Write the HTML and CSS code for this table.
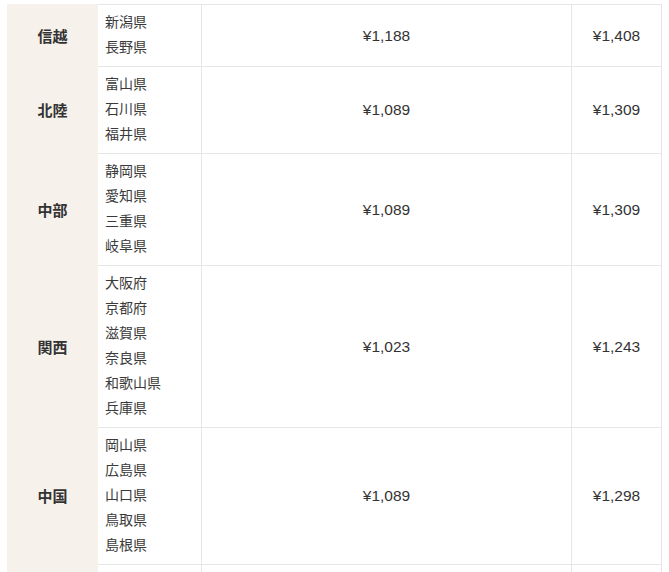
FILE: index.html
```html
<!DOCTYPE html>
<html lang="ja">
<head>
<meta charset="utf-8">
<title>送料表</title>
<link rel="stylesheet" href="styles.css">
</head>
<body>
<div class="wrap">
  <div class="table">
    <div class="row">
      <div class="region">信越</div>
      <div class="prefs">新潟県<br>長野県</div>
      <div class="price">¥1,188</div>
      <div class="price">¥1,408</div>
    </div>
    <div class="row">
      <div class="region">北陸</div>
      <div class="prefs">富山県<br>石川県<br>福井県</div>
      <div class="price">¥1,089</div>
      <div class="price">¥1,309</div>
    </div>
    <div class="row">
      <div class="region">中部</div>
      <div class="prefs">静岡県<br>愛知県<br>三重県<br>岐阜県</div>
      <div class="price">¥1,089</div>
      <div class="price">¥1,309</div>
    </div>
    <div class="row">
      <div class="region">関西</div>
      <div class="prefs">大阪府<br>京都府<br>滋賀県<br>奈良県<br>和歌山県<br>兵庫県</div>
      <div class="price">¥1,023</div>
      <div class="price">¥1,243</div>
    </div>
    <div class="row">
      <div class="region">中国</div>
      <div class="prefs">岡山県<br>広島県<br>山口県<br>鳥取県<br>島根県</div>
      <div class="price">¥1,089</div>
      <div class="price">¥1,298</div>
    </div>
    <div class="row row-next">
      <div class="region"></div>
      <div class="prefs"></div>
      <div class="price"></div>
      <div class="price"></div>
    </div>
  </div>
</div>
</body>
</html>
```
FILE: styles.css
```css
html, body {
  margin: 0;
  padding: 0;
  background: #ffffff;
}

.wrap {
  height: 572px;
  overflow: hidden;
  padding: 4px 7px 0;
  box-sizing: border-box;
  font-family: "Liberation Sans", "Noto Sans CJK JP", sans-serif;
  color: #333333;
}

.row {
  display: grid;
  grid-template-columns: 91px 104px 370px 90px;
}

.row-next {
  height: 40px;
}

.region {
  background: #f6f1eb;
  display: flex;
  align-items: center;
  justify-content: center;
  font-weight: bold;
  font-size: 15px;
}

.prefs {
  border-top: 1px solid #e6e6e6;
  border-right: 1px solid #e6e6e6;
  padding: 5px 6px 6px 7px;
  font-size: 14px;
  line-height: 25px;
  color: #3a3a3a;
}

.price {
  border-top: 1px solid #e6e6e6;
  border-right: 1px solid #e6e6e6;
  display: flex;
  align-items: center;
  justify-content: center;
  font-size: 15.5px;
}
```
